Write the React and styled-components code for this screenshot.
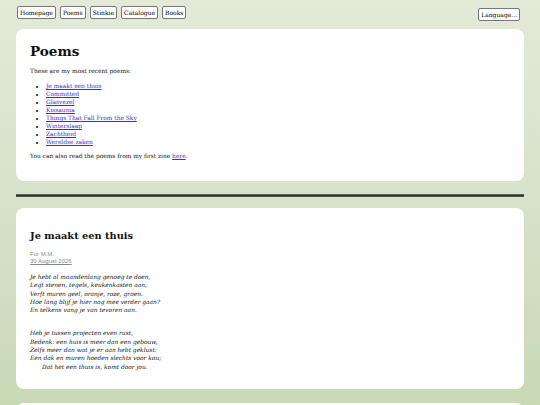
import React from 'react';
import styled, { createGlobalStyle } from 'styled-components';

const GlobalStyle = createGlobalStyle`
  html, body {
    margin: 0;
    padding: 0;
  }
  body {
    min-height: 405px;
    background: linear-gradient(180deg, #e3ead8 0%, #d6e2c9 45%, #c4d7b1 100%);
    font-family: "DejaVu Serif", Georgia, serif;
    color: #111;
  }
`;

const Nav = styled.nav`
  display: flex;
  align-items: flex-start;
  justify-content: space-between;
  padding: 6px 20px 0 17px;
  height: 23px;
`;

const NavGroup = styled.div`
  display: flex;
  gap: 4px;
`;

const NavButton = styled.button`
  font-family: "DejaVu Serif", Georgia, serif;
  font-size: 6px;
  line-height: 11px;
  height: 13px;
  padding: 0 2px;
  background: #fff;
  color: #000;
  border: 1px solid #777;
  border-radius: 2px;
  margin-top: ${(p) => (p.$low ? '2px' : '0')};
`;

const Card = styled.section`
  margin: 0 16px;
  background: #fff;
  border-radius: 8px;
  padding: ${(p) => p.$pad || '12px 14px'};
`;

const Title = styled.h1`
  margin: 0;
  font-size: ${(p) => p.$size || '13.5px'};
  font-weight: bold;
  color: #111;
  line-height: 1.2;
`;

const Text = styled.p`
  margin: ${(p) => p.$margin || '0'};
  font-size: 5.9px;
  line-height: 8px;
  color: #111;
`;

const List = styled.ul`
  margin: 7px 0 6px;
  padding-left: 16px;
  font-size: 5.9px;
  line-height: 8px;
`;

const Link = styled.a`
  color: #3535c8;
  text-decoration: underline;
`;

const Rule = styled.hr`
  margin: 13px 16px 11px;
  height: 3px;
  border: none;
  background: linear-gradient(180deg, #6f7767 0%, #2f322c 50%, #5d6356 100%);
`;

const Meta = styled.div`
  margin-top: 9px;
  font-family: "Liberation Sans", Arial, sans-serif;
  font-size: 6px;
  line-height: 7px;
  color: #888;
`;

const DateLine = styled.div`
  text-decoration: underline;
`;

const Stanza = styled.p`
  margin: ${(p) => p.$margin || '8px 0 0'};
  font-style: italic;
  font-size: 5.9px;
  line-height: 8.3px;
  color: #111;
`;

const Indent = styled.span`
  padding-left: 12px;
`;

const Gap = styled.div`
  height: 14px;
`;

const poems = [
  'Je maakt een thuis',
  'Committed',
  'Glasvezel',
  'Kissaunia',
  'Things That Fall From the Sky',
  'Winterslaap',
  'Zachtheid',
  'Wereldse zaken',
];

export default function App() {
  return (
    <>
      <GlobalStyle />
      <Nav>
        <NavGroup>
          {['Homepage', 'Poems', 'Stinkie', 'Catalogue', 'Books'].map((n) => (
            <NavButton key={n}>{n}</NavButton>
          ))}
        </NavGroup>
        <NavButton $low>Language...</NavButton>
      </Nav>

      <Card $pad="14px 14px 21px">
        <Title>Poems</Title>
        <Text $margin="8px 0 0">These are my most recent poems:</Text>
        <List>
          {poems.map((p) => (
            <li key={p}>
              <Link href="#">{p}</Link>
            </li>
          ))}
        </List>
        <Text>
          You can also read the poems from my first zine <Link href="#">here</Link>.
        </Text>
      </Card>

      <Rule />

      <Card $pad="22px 14px 18px">
        <Title $size="9.8px">Je maakt een thuis</Title>
        <Meta>
          <div>For M.M.</div>
          <DateLine>30 August 2026</DateLine>
        </Meta>
        <Stanza>
          Je hebt al maandenlang genoeg te doen,<br />
          Legt stenen, tegels, keukenkasten aan,<br />
          Verft muren geel, oranje, roze, groen.<br />
          Hoe lang blijf je hier nog mee verder gaan?<br />
          En telkens vang je van tevoren aan.
        </Stanza>
        <Stanza $margin="15px 0 0">
          Heb je tussen projecten even rust,<br />
          Bedenk: een huis is meer dan een gebouw,<br />
          Zelfs meer dan wat je er aan hebt geklust:<br />
          Een dak en muren hoeden slechts voor kou;<br />
          <Indent>Dat het een thuis is, komt door jou.</Indent>
        </Stanza>
      </Card>

      <Gap />
      <Card $pad="20px 14px">
        <Title $size="11px">&nbsp;</Title>
      </Card>
    </>
  );
}
